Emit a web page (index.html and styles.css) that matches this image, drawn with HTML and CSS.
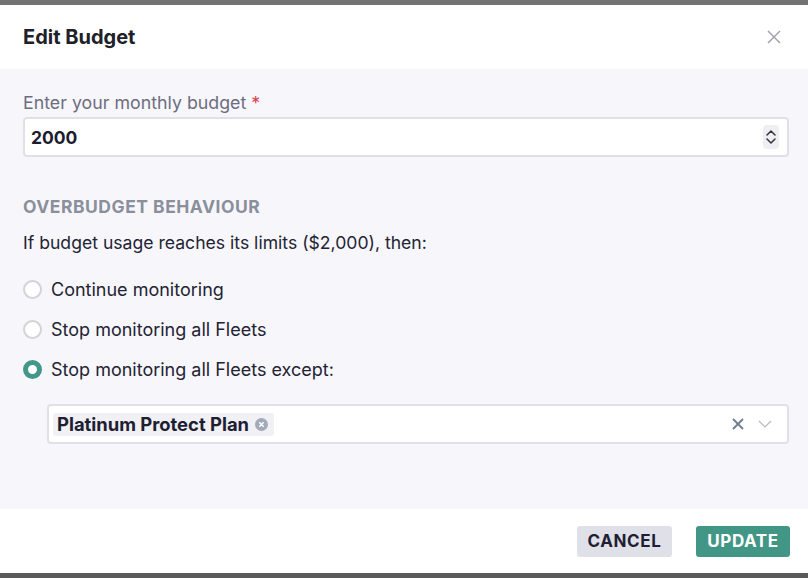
FILE: index.html
```html
<!DOCTYPE html>
<html lang="en">
<head>
    <meta charset="UTF-8">
    <meta name="viewport" content="width=device-width, initial-scale=1.0">
    <title>Edit Budget</title>

    <link rel="stylesheet" href="styles.css">
</head>
<body>
    <div class="backdrop">
        <div class="modal">
            <div class="modal-header">
                <h2 class="modal-title">Edit Budget</h2>
                <button class="close-button" aria-label="Close">
                    <svg width="14" height="14" viewBox="0 0 14 14"><path d="M1 1L13 13M13 1L1 13" stroke="#9c9cab" stroke-width="1.4" fill="none"/></svg>
                </button>
            </div>

            <div class="modal-body">
                <label class="field-label">Enter your monthly budget <span class="required">*</span></label>
                <div class="number-field">
                    <input class="number-input" type="text" value="2000">
                    <span class="spinner">
                        <svg width="16" height="24" viewBox="0 0 16 24"><path d="M4 10L8 6L12 10M4 14L8 18L12 14" stroke="#333" stroke-width="1.5" fill="none" stroke-linecap="round" stroke-linejoin="round"/></svg>
                    </span>
                </div>

                <h3 class="section-title">OVERBUDGET BEHAVIOUR</h3>
                <p class="intro">If budget usage reaches its limits ($2,000), then:</p>

                <div class="radio-list">
                    <label class="radio-row"><span class="radio"></span>Continue monitoring</label>
                    <label class="radio-row"><span class="radio"></span>Stop monitoring all Fleets</label>
                    <label class="radio-row"><span class="radio checked"></span>Stop monitoring all Fleets except:</label>
                </div>

                <div class="multi-select">
                    <span class="tag">Platinum Protect Plan
                        <svg class="tag-remove" width="13" height="13" viewBox="0 0 13 13"><circle cx="6.5" cy="6.5" r="6.5" fill="#a3aaba"/><path d="M4.3 4.3L8.7 8.7M8.7 4.3L4.3 8.7" stroke="#fff" stroke-width="1.4"/></svg>
                    </span>
                    <span class="select-icons">
                        <svg width="12" height="12" viewBox="0 0 12 12"><path d="M1 1L11 11M11 1L1 11" stroke="#6e7d8e" stroke-width="1.8"/></svg>
                        <svg width="14" height="8" viewBox="0 0 14 8"><path d="M1 1L7 7L13 1" stroke="#b5b9c4" stroke-width="1.2" fill="none"/></svg>
                    </span>
                </div>
            </div>

            <div class="modal-footer">
                <button class="btn btn-cancel">CANCEL</button>
                <button class="btn btn-update">UPDATE</button>
            </div>
        </div>
    </div>
</body>
</html>
```

FILE: styles.css
```css
body {
    margin: 0;
    font-family: Inter, "Noto Sans", sans-serif;
}

.backdrop {
    height: 578px;
    padding-top: 5px;
    box-sizing: border-box;
    background: linear-gradient(#737373, #5a5a5a);
}

.modal {
    width: 808px;
    height: 568px;
    background: white;
    display: flex;
    flex-direction: column;
}

.modal-header {
    height: 64px;
    padding: 0 27px 0 23px;
    display: flex;
    align-items: center;
    justify-content: space-between;
}

.modal-title {
    margin: 0;
    font-size: 20px;
    font-weight: 700;
    color: #202029;
}

.close-button {
    background: transparent;
    border: none;
    padding: 0;
    display: flex;
    cursor: pointer;
}

.modal-body {
    flex: 1;
    background-color: #f7f7fb;
    padding: 24px 19px 0 23px;
}

.field-label {
    display: block;
    font-size: 17.8px;
    line-height: 20px;
    color: #6d6d7f;
    margin-bottom: 4px;
}

.required {
    color: #d9434b;
}

.number-field {
    height: 40px;
    box-sizing: border-box;
    border: 2px solid #e0e0e9;
    border-radius: 4px;
    background: white;
    display: flex;
    align-items: center;
    padding: 0 8px 0 6px;
}

.number-input {
    flex: 1;
    border: none;
    outline: none;
    font-family: inherit;
    font-size: 17.5px;
    font-weight: 700;
    color: #1c1c2e;
    padding: 0;
}

.spinner {
    display: flex;
    background: #efeff3;
    border-radius: 4px;
}

.section-title {
    margin: 40px 0 0;
    font-size: 17.5px;
    line-height: 20px;
    font-weight: 700;
    letter-spacing: 0.5px;
    color: #8a8f9b;
}

.intro {
    margin: 16px 0 0;
    font-size: 17.6px;
    line-height: 20px;
    color: #232333;
}

.radio-list {
    margin-top: 24px;
    display: flex;
    flex-direction: column;
    gap: 16px;
}

.radio-row {
    height: 24px;
    display: flex;
    align-items: center;
    gap: 9px;
    font-size: 18px;
    color: #232333;
}

.radio {
    width: 19px;
    height: 19px;
    box-sizing: border-box;
    border: 2px solid #d2d2da;
    border-radius: 50%;
    background: white;
}

.radio.checked {
    border: 5px solid #43978a;
}

.multi-select {
    margin: 23px 0 0 24px;
    height: 40px;
    box-sizing: border-box;
    border: 2px solid #e0e0e9;
    border-radius: 4px;
    background: white;
    display: flex;
    align-items: center;
    justify-content: space-between;
    padding: 0 15px 0 4px;
}

.tag {
    height: 23px;
    display: flex;
    align-items: center;
    gap: 6px;
    padding: 0 6px 0 4px;
    background: #f0f0f5;
    border-radius: 3px;
    font-size: 18.4px;
    font-weight: 700;
    color: #1e1e32;
}

.select-icons {
    display: flex;
    align-items: center;
    gap: 14px;
}

.modal-footer {
    height: 64px;
    padding: 0 18px;
    display: flex;
    align-items: center;
    justify-content: flex-end;
    gap: 24px;
}

.btn {
    height: 31px;
    border: none;
    border-radius: 3px;
    padding: 0 8px;
    font-family: inherit;
    font-size: 17px;
    font-weight: 700;
    letter-spacing: 0.6px;
    cursor: pointer;
}

.btn-cancel {
    width: 95px;
    background-color: #e0e0e9;
    color: #1f1f33;
}

.btn-update {
    width: 94px;
    background-color: #429686;
    color: white;
}
```
